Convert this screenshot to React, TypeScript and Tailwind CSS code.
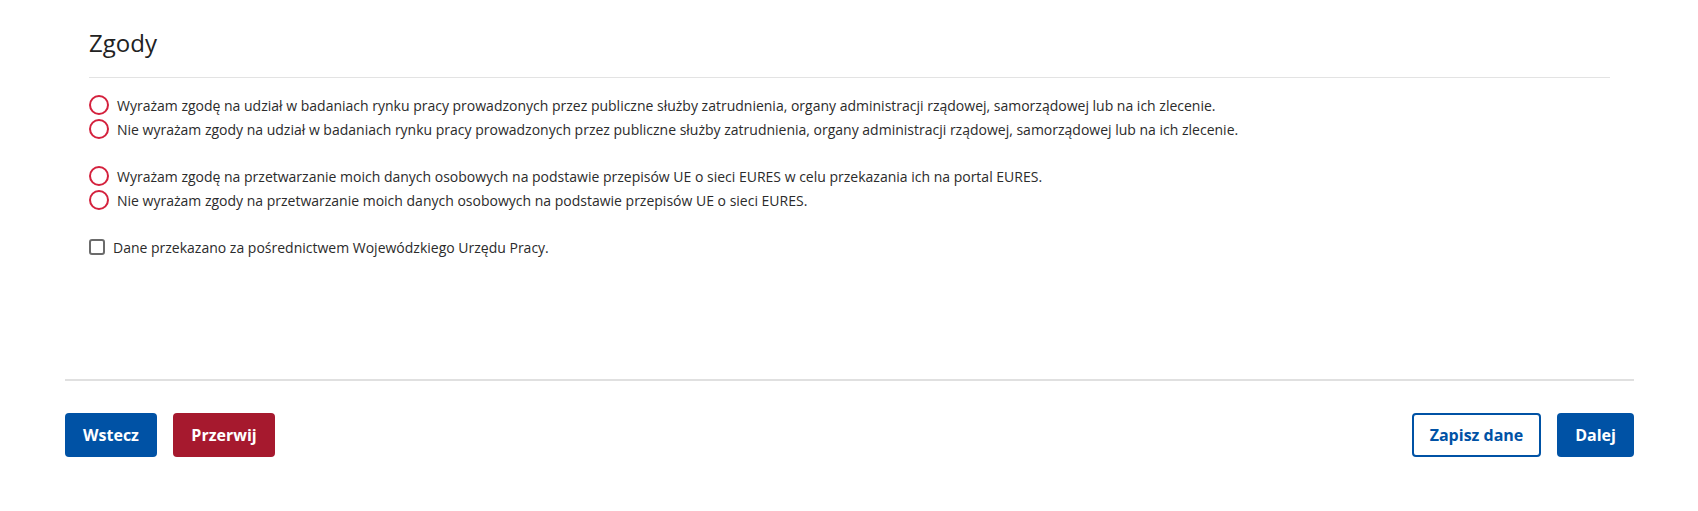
import React, { useState } from 'react';

const consentGroups = [
  {
    name: 'badania',
    options: [
      'Wyrażam zgodę na udział w badaniach rynku pracy prowadzonych przez publiczne służby zatrudnienia, organy administracji rządowej, samorządowej lub na ich zlecenie.',
      'Nie wyrażam zgody na udział w badaniach rynku pracy prowadzonych przez publiczne służby zatrudnienia, organy administracji rządowej, samorządowej lub na ich zlecenie.',
    ],
  },
  {
    name: 'eures',
    options: [
      'Wyrażam zgodę na przetwarzanie moich danych osobowych na podstawie przepisów UE o sieci EURES w celu przekazania ich na portal EURES.',
      'Nie wyrażam zgody na przetwarzanie moich danych osobowych na podstawie przepisów UE o sieci EURES.',
    ],
  },
];

function RadioRow({ label, checked, onSelect }: { label: string; checked: boolean; onSelect: () => void }) {
  return (
    <label className="flex items-center h-6 cursor-pointer" onClick={onSelect}>
      <span className="w-5 h-5 rounded-full border-[2.5px] border-[#d4213d] flex items-center justify-center shrink-0">
        {checked && <span className="w-2.5 h-2.5 rounded-full bg-[#d4213d]" />}
      </span>
      <span className="ml-2 text-[14px] text-[#2b2b2b]">{label}</span>
    </label>
  );
}

function App() {
  const [answers, setAnswers] = useState<Record<string, number | null>>({ badania: null, eures: null });
  const [viaWup, setViaWup] = useState(false);

  return (
    <div className="min-h-screen bg-white" style={{ fontFamily: '"Open Sans", "Noto Sans", sans-serif' }}>
      <div className="w-[1570px] mx-auto pl-px">
        {/* Consents */}
        <section className="px-6 pt-[25px] h-[379px]">
          <h2 className="text-[24px] leading-9 text-[#222] pb-4 border-b border-[#e3e3e3]">Zgody</h2>

          <div className="pt-[15px] flex flex-col gap-[23px]">
            {consentGroups.map(group => (
              <div key={group.name} className="flex flex-col">
                {group.options.map((opt, i) => (
                  <RadioRow
                    key={i}
                    label={opt}
                    checked={answers[group.name] === i}
                    onSelect={() => setAnswers(a => ({ ...a, [group.name]: i }))}
                  />
                ))}
              </div>
            ))}

            <label className="flex items-center h-6 cursor-pointer" onClick={() => setViaWup(v => !v)}>
              <span className="w-4 h-4 rounded-[3px] border-2 border-[#6b6b6b] flex items-center justify-center shrink-0">
                {viaWup && <span className="w-2 h-2 bg-[#6b6b6b]" />}
              </span>
              <span className="ml-2 text-[14px] text-[#2b2b2b]">Dane przekazano za pośrednictwem Wojewódzkiego Urzędu Pracy.</span>
            </label>
          </div>
        </section>

        {/* Actions */}
        <div className="border-t-2 border-[#e0e0e0] pt-[32px] flex justify-between">
          <div className="flex gap-4">
            <button className="h-11 w-[92px] rounded bg-[#0052a5] text-white font-bold text-[16px]">Wstecz</button>
            <button className="h-11 w-[102px] rounded bg-[#a6192e] text-white font-bold text-[16px]">Przerwij</button>
          </div>
          <div className="flex gap-4">
            <button className="h-11 w-[129px] rounded border-2 border-[#0052a5] bg-white text-[#0052a5] font-bold text-[16px]">Zapisz dane</button>
            <button className="h-11 w-[77px] rounded bg-[#0052a5] text-white font-bold text-[16px]">Dalej</button>
          </div>
        </div>
      </div>
    </div>
  );
}

export default App;
